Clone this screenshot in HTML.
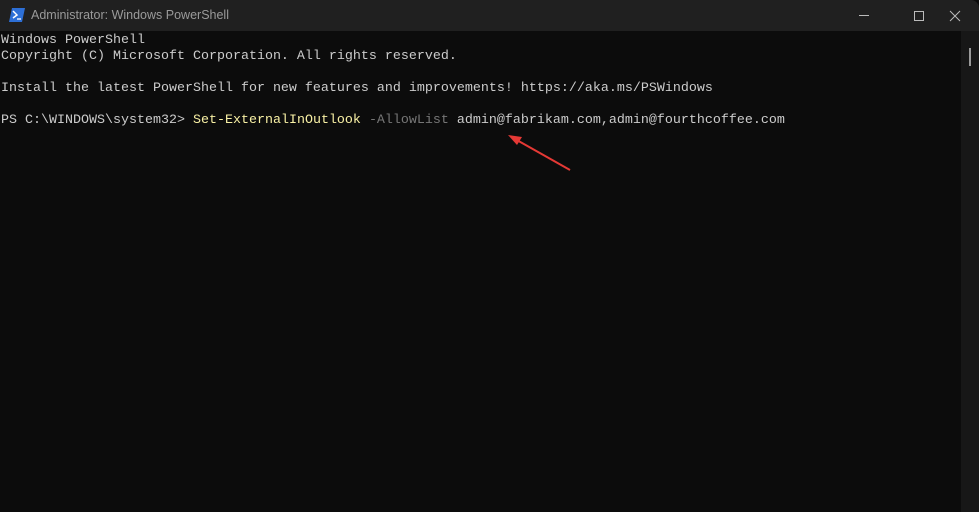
<!DOCTYPE html><html><head><style>
body{margin:0;width:979px;height:512px;background:#0c0c0c;overflow:hidden;position:relative;font-family:"Liberation Sans",sans-serif}
.tb{position:absolute;left:0;top:0;width:979px;height:31px;background:#202020;border-top-right-radius:8px}
.tt{position:absolute;left:31px;top:8px;font-size:12.5px;color:#9a9a9a}
.term{position:absolute;left:1px;top:33px;font-family:"Liberation Mono",monospace;font-size:13.33px;line-height:16px;color:#cccccc;white-space:pre}
.sb{position:absolute;left:961px;top:31px;width:18px;height:481px;background:#171717}
</style></head><body>
<div class="tb"></div>
<svg style="position:absolute;left:9px;top:8px" width="16" height="14"><polygon points="3,0 16,0 13,14 0,14" fill="#2d6fd6"/><path d="M4,3 L8,7 L4,10" stroke="#fff" stroke-width="1.5" fill="none"/><path d="M8,11 H12" stroke="#fff" stroke-width="1.3"/></svg>
<div class="tt">Administrator: Windows PowerShell</div>
<svg style="position:absolute;left:850px;top:8px" width="120" height="16" fill="none" stroke="#bbb" stroke-width="1"><path d="M9,7.5 H19"/><rect x="64.5" y="3.5" width="9" height="9"/><path d="M110,3 L120,13 M120,3 L110,13" transform="translate(-10,0)"/></svg>
<div class="sb"><div style="position:absolute;left:8px;top:17px;width:2px;height:18px;background:#9a9a9a"></div></div>
<div class="term">Windows PowerShell
Copyright (C) Microsoft Corporation. All rights reserved.

Install the latest PowerShell for new features and improvements! https://aka.ms/PSWindows

PS C:\WINDOWS\system32> <span style="color:#f9f1a5">Set-ExternalInOutlook</span> <span style="color:#767676">-AllowList</span> admin@fabrikam.com,admin@fourthcoffee.com</div>
<svg style="position:absolute;left:0;top:0" width="979" height="512"><path d="M570,170 L515,139" stroke="#e53935" stroke-width="2"/><polygon points="508,135 522,137 517,145" fill="#e53935"/></svg>
</body></html>
